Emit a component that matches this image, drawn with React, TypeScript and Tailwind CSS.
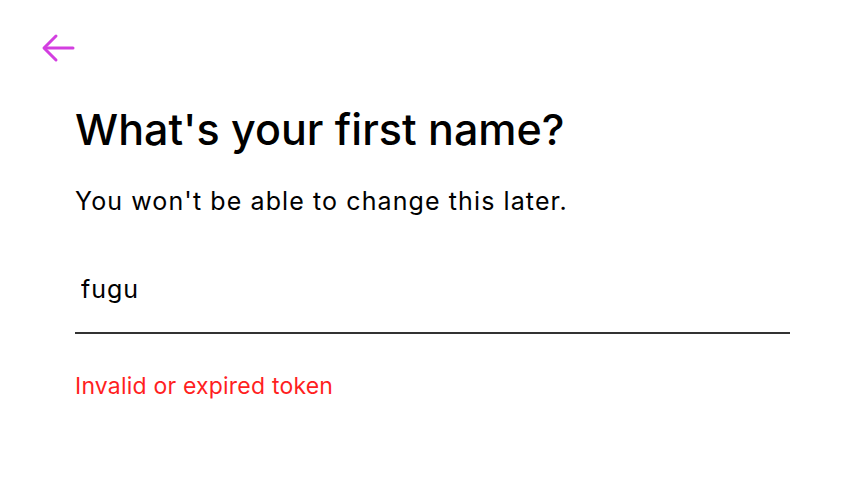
import React, { useState } from 'react';

// first-name step of the signup flow
const App: React.FC = () => {
  const [firstName, setFirstName] = useState('fugu');

  return (
    <div className="min-h-[479px] w-full bg-white font-['Inter',sans-serif] text-black">
      <div className="pl-[40px] pt-[32px]">
        <button className="flex h-[34px] w-[36px] items-center justify-center text-[#d33fe0]">
          <svg width="36" height="34" viewBox="0 0 36 34" fill="none" stroke="currentColor" strokeWidth="3" strokeLinecap="round" strokeLinejoin="round">
            <path d="M33 16H5" />
            <path d="M16 4L4 16l12 12" />
          </svg>
        </button>
      </div>

      <div className="w-[790px] pl-[75px] pt-[37px]">
        <h1 className="text-[43px] font-medium leading-[52px]">What's your first name?</h1>
        <p className="mt-[31px] text-[25px] leading-[30px] tracking-[1.1px]">You won't be able to change this later.</p>

        <div className="mt-[58px] border-b-2 border-[#333]">
          <input
            value={firstName}
            onChange={(e) => setFirstName(e.target.value)}
            className="w-full bg-transparent px-[6px] pb-[28px] text-[25px] leading-[30px] tracking-[1px] outline-none"
          />
        </div>

        <p className="mt-[38px] text-[23px] leading-[28px] tracking-[0.2px] text-[#ff1f1f]">Invalid or expired token</p>
      </div>
    </div>
  );
};

export default App;
